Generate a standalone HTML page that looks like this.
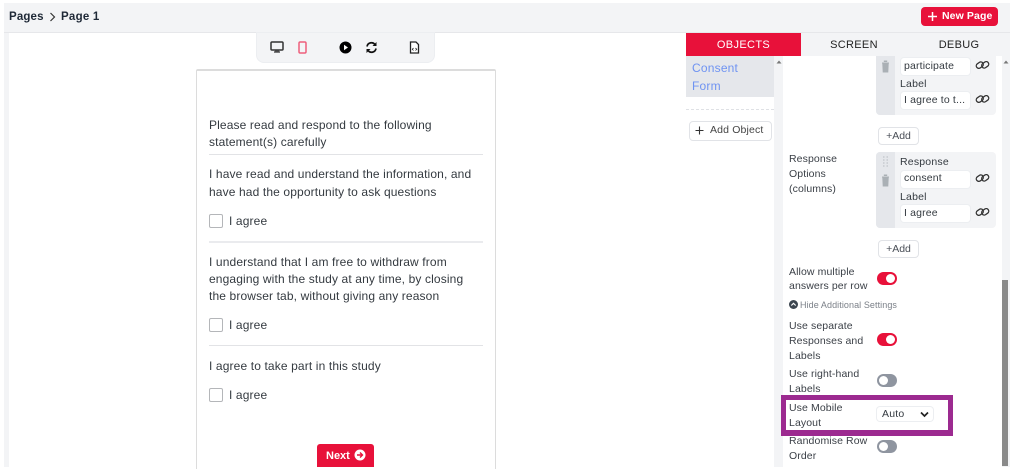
<!DOCTYPE html>
<html><head><meta charset="utf-8"><style>
html,body{margin:0;padding:0;background:#fff}
#p{position:relative;width:1016px;height:472px;overflow:hidden;background:#fff;font-family:"Liberation Sans",sans-serif;filter:blur(.35px)}
#p div,#p span,#p svg{position:absolute}
.t{white-space:nowrap;line-height:16px;height:16px;color:#343a40}
.m{font-size:12px;letter-spacing:.13px;left:209px}
.s{font-size:10.5px;letter-spacing:.1px;left:789px;color:#3a3f46;margin-top:1px}
.c{width:12px;height:12px;border:1.5px solid #b4b6b9;border-radius:2px;left:209px;background:#fff}
.hr{left:209px;width:274px;height:1px;background:#e2e3e6}
.inp{left:901px;width:69px;height:17px;background:#fff;border-radius:3px;box-shadow:0 0 0 1px #eceef1}
.tg{left:877px;width:20px;height:13px;border-radius:7px}
.tg i{position:absolute;top:2px;width:9px;height:9px;border-radius:50%;background:#fff}
.on{background:#e8113a}.on i{left:9px}
.off{background:#8f95a0}.off i{left:2px}
.add{left:878px;width:39px;height:16px;border:1px solid #e1e3e7;border-radius:4px;background:#fff;font-size:10.5px;line-height:17px;text-align:center;color:#4a4f57}
</style></head><body><div id="p">

<div style="left:4px;top:3px;width:1006px;height:29px;background:#f3f4f6;border-bottom:1px solid #e6e7ea"></div>
<div style="left:4px;top:33px;width:5px;height:434px;background:#f3f4f6"></div>

<div class="t" style="left:9px;top:9px;font-size:11.5px;font-weight:bold;color:#1f2937;letter-spacing:.15px">Pages</div>
<svg style="left:49px;top:12px" width="7" height="10" viewBox="0 0 7 10"><path d="M1.5 1l4 4-4 4" fill="none" stroke="#333" stroke-width="1.2"/></svg>
<div class="t" style="left:61px;top:9px;font-size:11.5px;font-weight:bold;color:#1f2937;letter-spacing:.25px">Page 1</div>

<div style="left:921px;top:7px;width:77px;height:19px;background:#e8113a;border-radius:4px"></div>
<svg style="left:927px;top:11px" width="11" height="11" viewBox="0 0 11 11"><path d="M5.5 1v9M1 5.5h9" stroke="#fff" stroke-width="1.5"/></svg>
<div class="t" style="left:942px;top:8px;font-size:10.5px;color:#fff;letter-spacing:.1px;font-weight:bold">New Page</div>

<div style="left:257px;top:33px;width:177px;height:29px;background:#f3f4f6;border-radius:0 0 7px 7px;box-shadow:0 0 0 1px #eceef1"></div>
<svg style="left:269px;top:40px" width="16" height="14" viewBox="0 0 16 14"><rect x="2" y="2" width="12" height="8" rx="1" fill="none" stroke="#333" stroke-width="1.5"/><path d="M5 12h6M7 10v2M9 10v2" stroke="#333" stroke-width="1.3"/></svg>
<svg style="left:297px;top:41px" width="11" height="13" viewBox="0 0 11 13"><rect x="2" y="1" width="7" height="11" rx="1.2" fill="none" stroke="#ee5f7c" stroke-width="1.5"/></svg>
<svg style="left:339px;top:41px" width="13" height="13" viewBox="0 0 13 13"><circle cx="6.5" cy="6.5" r="6" fill="#000"/><path d="M5 3.8l4 2.7-4 2.7z" fill="#fff"/></svg>
<svg style="left:365px;top:41px" width="13" height="13" viewBox="0 0 13 13"><path d="M2 5.5A4.5 4.5 0 0 1 10 3.5M11 7.5A4.5 4.5 0 0 1 3 9.5" fill="none" stroke="#111" stroke-width="1.7"/><path d="M11.5 1v4h-4zM1.5 12V8h4z" fill="#111"/></svg>
<svg style="left:409px;top:41px" width="11" height="13" viewBox="0 0 11 13"><path d="M1.5 1h5.5l2.5 2.5V12h-8z" fill="#fff" stroke="#222" stroke-width="1.3"/><path d="M4.5 7L3.3 8.3l1.2 1.2M6.5 7l1.2 1.3-1.2 1.2" fill="none" stroke="#222" stroke-width=".8"/></svg>

<!-- preview card -->
<div style="left:196px;top:68.5px;width:298px;height:398.5px;border:solid #dcdcdc;border-width:2px 1.5px 0;border-radius:2px 2px 0 0"></div>
<div class="t m" style="top:117px">Please read and respond to the following</div>
<div class="t m" style="top:134px">statement(s) carefully</div>
<div class="hr" style="top:154px"></div>
<div class="t m" style="top:166px">I have read and understand the information, and</div>
<div class="t m" style="top:184px">have had the opportunity to ask questions</div>
<div class="c" style="top:214px"></div>
<div class="t m" style="left:229px;top:213px">I agree</div>
<div class="hr" style="top:241px;height:2px;background:#eaebee"></div>
<div class="t m" style="top:254px">I understand that I am free to withdraw from</div>
<div class="t m" style="top:271px">engaging with the study at any time, by closing</div>
<div class="t m" style="top:288px">the browser tab, without giving any reason</div>
<div class="c" style="top:318px"></div>
<div class="t m" style="left:229px;top:317px">I agree</div>
<div class="hr" style="top:345px"></div>
<div class="t m" style="top:358px">I agree to take part in this study</div>
<div class="c" style="top:388px"></div>
<div class="t m" style="left:229px;top:387px">I agree</div>
<div style="left:317px;top:444px;width:57px;height:23px;background:#e8113a;border-radius:3px 3px 0 0"></div>
<div class="t" style="left:326px;top:448px;font-size:11px;font-weight:bold;color:#fff">Next</div>
<svg style="left:354px;top:449px" width="12" height="12" viewBox="0 0 12 12"><circle cx="6" cy="6" r="5.5" fill="#fff"/><path d="M3 6h5M6 3.5L8.5 6 6 8.5" fill="none" stroke="#e8113a" stroke-width="1.4"/></svg>

<!-- tabs -->
<div style="left:686px;top:33px;width:324px;height:23px;background:#f3f4f6"></div>
<div style="left:686px;top:33px;width:115px;height:23px;background:#e8113a"></div>
<div class="t" style="left:686px;width:115px;text-align:center;top:37px;font-size:11px;color:#fff;letter-spacing:.35px">OBJECTS</div>
<div class="t" style="left:811px;width:86px;text-align:center;top:37px;font-size:11px;color:#222;letter-spacing:.3px">SCREEN</div>
<div class="t" style="left:916px;width:86px;text-align:center;top:37px;font-size:11px;color:#222;letter-spacing:.3px">DEBUG</div>

<!-- object list -->
<div style="left:686px;top:56px;width:88px;height:41px;background:#e5e7eb"></div>
<div class="t" style="left:692px;top:60px;font-size:12px;color:#6f93f2;letter-spacing:.2px">Consent</div>
<div class="t" style="left:692px;top:78px;font-size:12px;color:#6f93f2;letter-spacing:.2px">Form</div>
<div style="left:686px;top:109px;width:88px;border-top:1px dashed #dfe1e5"></div>
<div style="left:689px;top:121px;width:81px;height:18px;border:1px solid #e1e3e7;border-radius:4px;background:#fff"></div>
<svg style="left:695px;top:126px" width="9" height="9" viewBox="0 0 9 9"><path d="M4.5 .5v8M.5 4.5h8" stroke="#333" stroke-width="1.1"/></svg>
<div class="t" style="left:710px;top:122px;font-size:10.5px;color:#444;letter-spacing:.15px">Add Object</div>
<div style="left:774px;top:56px;width:9px;height:411px;background:#f3f4f6"></div>
<svg style="left:776px;top:60px" width="6" height="4" viewBox="0 0 6 4"><path d="M3 .5L5.5 3.5H.5z" fill="#777"/></svg>

<!-- scrollbar -->
<div style="left:1002px;top:56px;width:8px;height:411px;background:#f3f4f6"></div>
<svg style="left:1003px;top:60px" width="6" height="4" viewBox="0 0 6 4"><path d="M3 .5L5.5 3.5H.5z" fill="#777"/></svg>
<div style="left:1002px;top:280px;width:6px;height:186px;background:#8a8a8a"></div>

<!-- option card 1 -->
<div style="left:876px;top:56px;width:120px;height:59px;background:#f3f4f6;border-radius:0 0 4px 4px"></div>
<div style="left:876px;top:56px;width:19px;height:59px;background:#e5e7eb;border-radius:0 0 0 4px"></div>
<svg style="left:880px;top:60px" width="11" height="13" viewBox="0 0 11 13"><path d="M2 3h7M4.3 2V1h2.4v1M2.8 3.5l.4 8.5h4.6l.4-8.5z" fill="#aab0b5" stroke="#aab0b5"/></svg>
<div class="inp" style="top:58px"></div>
<div class="t" style="left:904px;top:58px;font-size:10.5px;letter-spacing:.15px">participate</div>
<svg style="left:975px;top:58px" width="15" height="14" viewBox="0 0 15 14"><g fill="none" stroke="#333" stroke-width="1.3"><rect x="1" y="4.5" width="7.5" height="5" rx="2.5" transform="rotate(-35 5 7)"/><rect x="6.5" y="4.5" width="7.5" height="5" rx="2.5" transform="rotate(-35 10 7)"/></g></svg>
<div class="t" style="left:900px;top:76px;font-size:10.5px;letter-spacing:.2px">Label</div>
<div class="inp" style="top:92px"></div>
<div class="t" style="left:904px;top:92px;font-size:10.5px;letter-spacing:.15px">I agree to t...</div>
<svg style="left:975px;top:92px" width="15" height="14" viewBox="0 0 15 14"><g fill="none" stroke="#333" stroke-width="1.3"><rect x="1" y="4.5" width="7.5" height="5" rx="2.5" transform="rotate(-35 5 7)"/><rect x="6.5" y="4.5" width="7.5" height="5" rx="2.5" transform="rotate(-35 10 7)"/></g></svg>
<div class="add" style="top:127px">+Add</div>

<!-- left labels -->
<div class="t s" style="top:150px">Response</div>
<div class="t s" style="top:165px">Options</div>
<div class="t s" style="top:180px">(columns)</div>

<!-- option card 2 -->
<div style="left:876px;top:152px;width:120px;height:76px;background:#f3f4f6;border-radius:4px"></div>
<div style="left:876px;top:152px;width:19px;height:76px;background:#e5e7eb;border-radius:4px 0 0 4px"></div>
<svg style="left:882px;top:156px" width="7" height="11" viewBox="0 0 7 11"><path d="M1 1h1.5M4.5 1H6M1 4h1.5M4.5 4H6M1 7h1.5M4.5 7H6M1 10h1.5M4.5 10H6" stroke="#c0c4c9" stroke-width="1.2"/></svg>
<svg style="left:880px;top:174px" width="11" height="13" viewBox="0 0 11 13"><path d="M2 3h7M4.3 2V1h2.4v1M2.8 3.5l.4 8.5h4.6l.4-8.5z" fill="#aab0b5" stroke="#aab0b5"/></svg>
<div class="t" style="left:900px;top:154px;font-size:10.5px;letter-spacing:.2px">Response</div>
<div class="inp" style="top:171px"></div>
<div class="t" style="left:904px;top:170px;font-size:10.5px;letter-spacing:.15px">consent</div>
<svg style="left:975px;top:171px" width="15" height="14" viewBox="0 0 15 14"><g fill="none" stroke="#333" stroke-width="1.3"><rect x="1" y="4.5" width="7.5" height="5" rx="2.5" transform="rotate(-35 5 7)"/><rect x="6.5" y="4.5" width="7.5" height="5" rx="2.5" transform="rotate(-35 10 7)"/></g></svg>
<div class="t" style="left:900px;top:189px;font-size:10.5px;letter-spacing:.2px">Label</div>
<div class="inp" style="top:205px"></div>
<div class="t" style="left:904px;top:205px;font-size:10.5px;letter-spacing:.15px">I agree</div>
<svg style="left:975px;top:205px" width="15" height="14" viewBox="0 0 15 14"><g fill="none" stroke="#333" stroke-width="1.3"><rect x="1" y="4.5" width="7.5" height="5" rx="2.5" transform="rotate(-35 5 7)"/><rect x="6.5" y="4.5" width="7.5" height="5" rx="2.5" transform="rotate(-35 10 7)"/></g></svg>
<div class="add" style="top:240px">+Add</div>

<div class="t s" style="top:263px">Allow multiple</div>
<div class="t s" style="top:277px">answers per row</div>
<div class="tg on" style="top:272px"><i></i></div>
<svg style="left:789px;top:300px" width="9" height="9" viewBox="0 0 9 9"><circle cx="4.5" cy="4.5" r="4.5" fill="#3d4650"/><path d="M2.3 5.5L4.5 3.3 6.7 5.5" fill="none" stroke="#fff" stroke-width="1.1"/></svg>
<div class="t" style="left:800px;top:297px;font-size:9px;color:#7b8088;letter-spacing:.08px">Hide Additional Settings</div>
<div class="t s" style="top:317px">Use separate</div>
<div class="t s" style="top:332px">Responses and</div>
<div class="t s" style="top:347px">Labels</div>
<div class="tg on" style="top:333px"><i></i></div>
<div class="t s" style="top:365px">Use right-hand</div>
<div class="t s" style="top:380px">Labels</div>
<div class="tg off" style="top:374px"><i></i></div>

<div style="left:781px;top:395px;width:162px;height:30px;border:solid #9c2a90;border-width:5px 5px 6px;"></div>
<div class="t s" style="top:399px">Use Mobile</div>
<div class="t s" style="top:414px">Layout</div>
<div style="left:877px;top:407px;width:56px;height:14px;background:#fff;border-radius:3px;box-shadow:0 0 0 1px #eceef1"></div>
<div class="t" style="left:882px;top:406px;font-size:10.5px;letter-spacing:.2px">Auto</div>
<svg style="left:920px;top:411px" width="9" height="7" viewBox="0 0 9 7"><path d="M1 1.5l3.5 3.5L8 1.5" fill="none" stroke="#222" stroke-width="1.7"/></svg>

<div class="t s" style="top:432px">Randomise Row</div>
<div class="t s" style="top:447px">Order</div>
<div class="tg off" style="top:440px"><i></i></div>

</div></body></html>
